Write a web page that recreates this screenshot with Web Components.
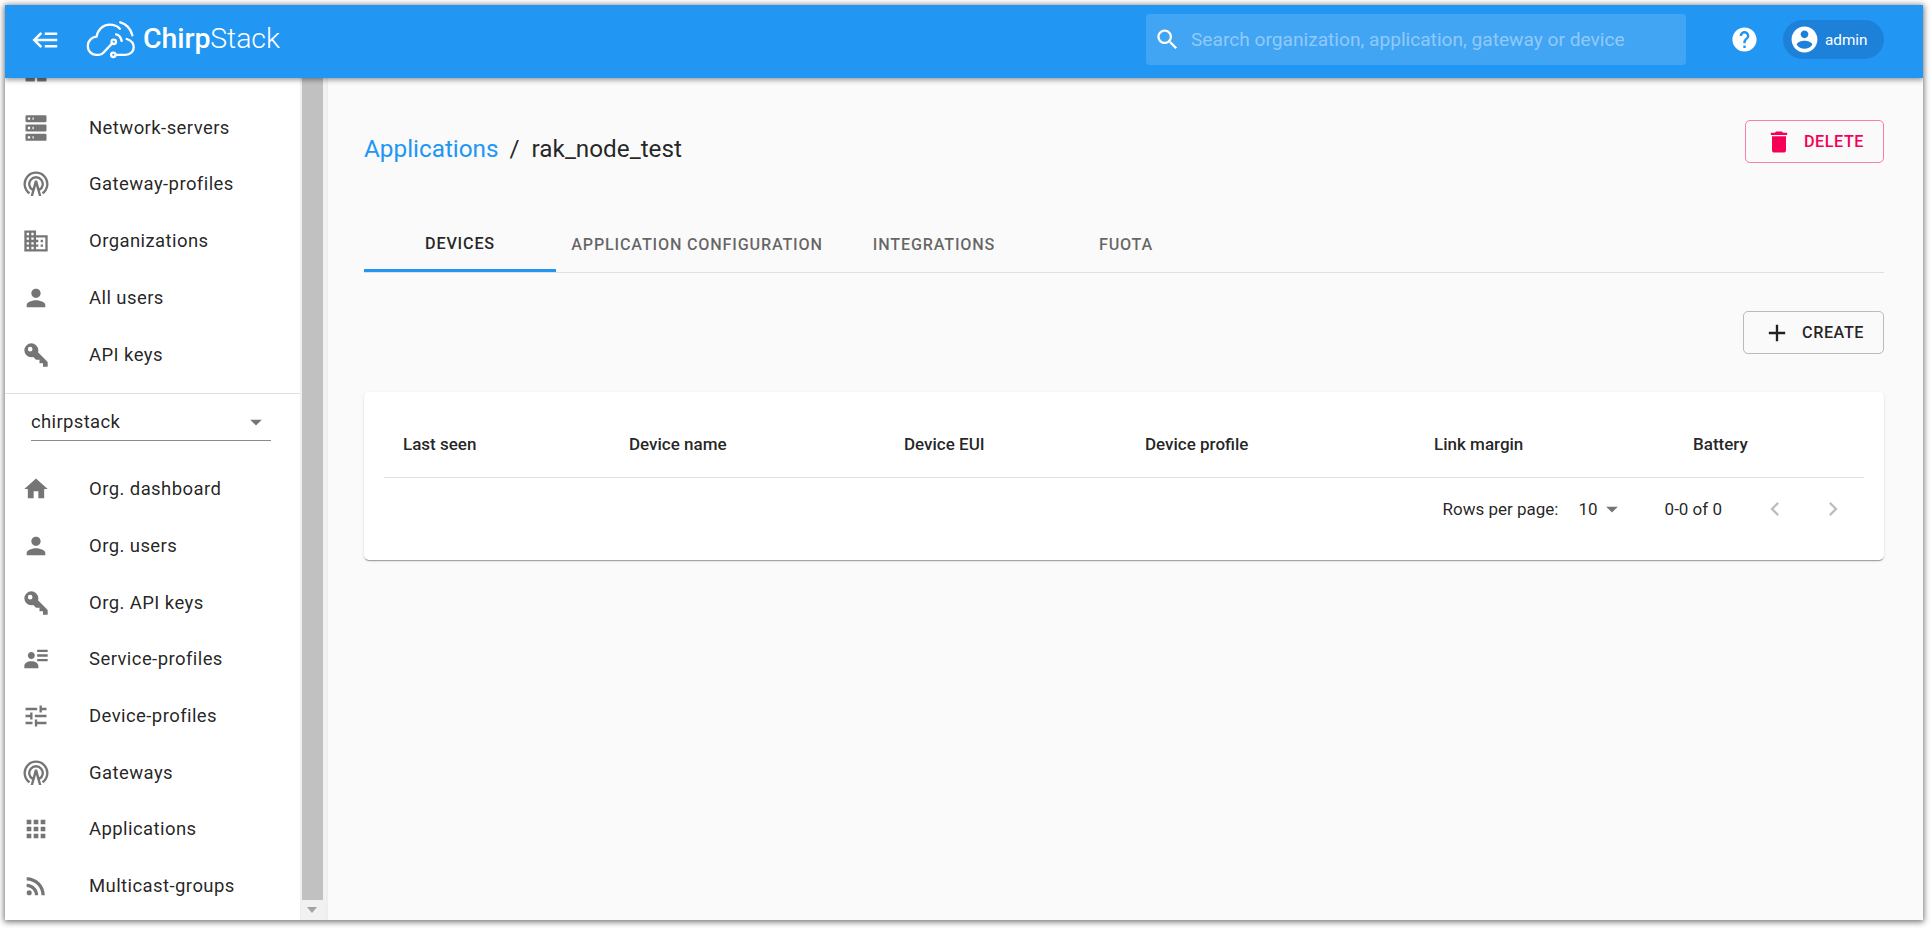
<!DOCTYPE html>
<html lang="en"><head><meta charset="utf-8"><title>ChirpStack</title>
<style>
html,body{margin:0;padding:0;background:#fff;height:100%;overflow:hidden}
body{font-family:Roboto,"Liberation Sans",sans-serif;color:rgba(0,0,0,.87)}
</style></head><body>
<app-frame>
  <app-header></app-header>
  <app-body>
    <side-nav>
      <nav-item icon="dashboard"></nav-item>
      <nav-item icon="server" label="Network-servers"></nav-item>
      <nav-item icon="antenna" label="Gateway-profiles"></nav-item>
      <nav-item icon="domain" label="Organizations"></nav-item>
      <nav-item icon="person" label="All users"></nav-item>
      <nav-item icon="key" label="API keys"></nav-item>
      <org-select slot="select"></org-select>
      <nav-item slot="org" icon="home" label="Org. dashboard"></nav-item>
      <nav-item slot="org" icon="person" label="Org. users"></nav-item>
      <nav-item slot="org" icon="key" label="Org. API keys"></nav-item>
      <nav-item slot="org" icon="details" label="Service-profiles"></nav-item>
      <nav-item slot="org" icon="tune" label="Device-profiles"></nav-item>
      <nav-item slot="org" icon="antenna" label="Gateways"></nav-item>
      <nav-item slot="org" icon="apps" label="Applications"></nav-item>
      <nav-item slot="org" icon="rss" label="Multicast-groups"></nav-item>
    </side-nav>
    <fake-scrollbar></fake-scrollbar>
    <app-main></app-main>
  </app-body>
</app-frame>
<script>
const P={
dashboard:'M3 13h8V3H3v10zm0 8h8v-6H3v6zm10 0h8V11h-8v10zm0-18v6h8V3h-8z',
server:'M4,1H20A1,1 0 0,1 21,2V6A1,1 0 0,1 20,7H4A1,1 0 0,1 3,6V2A1,1 0 0,1 4,1M4,9H20A1,1 0 0,1 21,10V14A1,1 0 0,1 20,15H4A1,1 0 0,1 3,14V10A1,1 0 0,1 4,9M4,17H20A1,1 0 0,1 21,18V22A1,1 0 0,1 20,23H4A1,1 0 0,1 3,22V18A1,1 0 0,1 4,17M9,5H10V3H9V5M9,13H10V11H9V13M9,21H10V19H9V21M5,3V5H7V3H5M5,11V13H7V11H5M5,19V21H7V19H5Z',
antenna:'M5.86 20.77A10.7 10.7 0 1 1 18.14 20.77L16.99 19.13A8.7 8.7 0 1 0 7.01 19.13ZM8.6 17.89A6.8 6.8 0 1 1 15.4 17.89L14.4 16.16A4.8 4.8 0 1 0 9.6 16.16ZM11 9h2l3.6 13.2h-2.1L12 13.5 9.5 22.2H7.4Z',
domain:'M12 7V3H2v18h20V7H12zM6 19H4v-2h2v2zm0-4H4v-2h2v2zm0-4H4V9h2v2zm0-4H4V5h2v2zm4 12H8v-2h2v2zm0-4H8v-2h2v2zm0-4H8V9h2v2zm0-4H8V5h2v2zm10 12h-8v-2h2v-2h-2v-2h2v-2h-2V9h8v10zm-2-8h-2v2h2v-2zm0 4h-2v2h2v-2z',
person:'M12 12c2.21 0 4-1.79 4-4s-1.79-4-4-4-4 1.79-4 4 1.79 4 4 4zm0 2c-2.67 0-8 1.34-8 4v2h16v-2c0-2.66-5.33-4-8-4z',
key:'M22,18V22H18V19H15V16H12L9.74,13.74C9.19,13.91 8.61,14 8,14A6,6 0 0,1 2,8A6,6 0 0,1 8,2A6,6 0 0,1 14,8C14,8.61 13.91,9.19 13.74,9.74L22,18M7,5A2,2 0 0,0 5,7A2,2 0 0,0 7,9A2,2 0 0,0 9,7A2,2 0 0,0 7,5Z',
home:'M10 20v-6h4v6h5v-8h3L12 3 2 12h3v8z',
details:'M11,9C11,10.66 9.66,12 8,12C6.34,12 5,10.66 5,9C5,7.34 6.34,6 8,6C9.66,6 11,7.34 11,9M14,20H2V18C2,15.79 4.69,14 8,14C11.31,14 14,15.79 14,18M22,12V14H13V12M22,8V10H13V8M22,4V6H13V4Z',
tune:'M3 17v2h6v-2H3zM3 5v2h10V5H3zm10 16v-2h8v-2h-8v-2h-2v6h2zM7 9v2H3v2h4v2h2V9H7zm14 4v-2H11v2h10zm-6-4h2V7h4V5h-4V3h-2v6z',
apps:'M4 8h4V4H4v4zm6 12h4v-4h-4v4zm-6 0h4v-4H4v4zm0-6h4v-4H4v4zm6 0h4v-4h-4v4zm6-10v4h4V4h-4zm-6 4h4V4h-4v4zm6 6h4v-4h-4v4zm0 6h4v-4h-4v4z',
rss:'M6.18 15.64a2.18 2.18 0 1 1 0 4.36 2.18 2.18 0 0 1 0-4.36zM4 4.44v2.83c7.03 0 12.73 5.7 12.73 12.73h2.83c0-8.59-6.97-15.56-15.56-15.56zm0 5.66v2.83c3.9 0 7.07 3.17 7.07 7.07h2.83c0-5.47-4.43-9.9-9.9-9.9z',
search:'M15.5 14h-.79l-.28-.27C15.41 12.59 16 11.11 16 9.5 16 5.91 13.09 3 9.5 3S3 5.91 3 9.5 5.91 16 9.5 16c1.61 0 3.09-.59 4.23-1.57l.27.28v.79l5 4.99L20.49 19l-4.99-5zm-6 0C7.01 14 5 11.99 5 9.5S7.01 5 9.5 5 14 7.01 14 9.5 11.99 14 9.5 14z',
help:'M12 2C6.48 2 2 6.48 2 12s4.48 10 10 10 10-4.48 10-10S17.52 2 12 2zm1 17h-2v-2h2v2zm2.07-7.75l-.9.92C13.45 12.9 13 13.5 13 15h-2v-.5c0-1.1.45-2.1 1.17-2.83l1.24-1.26c.37-.36.59-.86.59-1.41 0-1.1-.9-2-2-2s-2 .9-2 2H8c0-2.21 1.79-4 4-4s4 1.79 4 4c0 .88-.36 1.68-.93 2.25z',
account:'M12 2C6.48 2 2 6.48 2 12s4.48 10 10 10 10-4.48 10-10S17.52 2 12 2zm0 3c1.66 0 3 1.34 3 3s-1.34 3-3 3-3-1.34-3-3 1.34-3 3-3zm0 14.2c-2.5 0-4.71-1.28-6-3.22.03-1.99 4-3.08 6-3.08 1.99 0 5.97 1.09 6 3.08-1.29 1.94-3.5 3.22-6 3.22z',
del:'M6 19c0 1.1.9 2 2 2h8c1.1 0 2-.9 2-2V7H6v12zM19 4h-3.5l-1-1h-5l-1 1H5v2h14V4z',
plus:'M19 13h-6v6h-2v-6H5v-2h6V5h2v6h6v2z',
back:'M5,13L9,17L7.6,18.42L1.18,12L7.6,5.58L9,7L5,11H21V13H5M21,6V8H11V6H21M21,16V18H11V16H21Z',
drop:'M7 10l5 5 5-5z',
prev:'M15.41 7.41L14 6l-6 6 6 6 1.41-1.41L10.83 12z',
next:'M10 6L8.59 7.41 13.17 12l-4.58 4.59L10 18l6-6z'};
function def(name,css,html){
  customElements.define(name,class extends HTMLElement{
    constructor(){super();this.attachShadow({mode:'open'});}
    connectedCallback(){
      const h=typeof html==='function'?html(this):html;
      this.shadowRoot.innerHTML='<style>'+css+'</style>'+h;
    }
  });
}
def('x-icon',':host{display:inline-flex;flex:none;width:var(--s,28px);height:var(--s,28px);color:inherit}svg{width:100%;height:100%;display:block;fill:currentColor}',
 e=>`<svg viewBox="0 0 24 24" aria-hidden="true"><path d="${P[e.getAttribute('name')]}"/></svg>`);
def('app-frame',`:host{display:flex;flex-direction:column;margin:5px 0 0 5px;width:1918px;height:915px;background:#fafafa;box-shadow:0 1px 6px 1px rgba(0,0,0,.55);overflow:hidden}`,`<slot></slot>`);
def('app-body',`:host{flex:1;min-height:0;display:flex}`,`<slot></slot>`);
def('app-header',`:host{display:flex;align-items:center;flex:none;height:73px;background:#2196f3;color:#fff;box-shadow:0 2px 5px rgba(0,0,0,.4);position:relative;z-index:2;box-sizing:border-box;padding:0 39px 4px 26px}
 .burger{--s:30px;margin-right:24px}
 .logo{display:flex;align-items:center;gap:6px;margin-top:-1px}
 .logo svg{width:52px;height:40px;display:block}
 .word{font-size:28.500px;line-height:40px;letter-spacing:-.1px;font-family:Roboto,sans-serif;font-weight:500;color:#fff}
 .word span{font-weight:300}
 .search{margin-left:auto;width:540px;height:51px;border-radius:4px;background:rgba(255,255,255,.15);display:flex;align-items:center;box-sizing:border-box;padding-left:8px;margin-right:44px}
 .search x-icon{--s:27px}
 .ph{margin-left:10px;font-size:19.150px;color:rgba(255,255,255,.42)}
 .help{--s:29px;margin-right:24px}
 .chip{display:flex;align-items:center;height:39px;width:101px;border-radius:20px;background:#1d81da;box-sizing:border-box;padding-left:6px;font-size:15.300px;font-weight:400}
 .chip x-icon{--s:31px}
 .chip span{margin-left:5px}`,
 `<x-icon class="burger" name="back"></x-icon>
 <div class="logo"><svg viewBox="84 14 56 42" fill="none" stroke="#fff" stroke-width="2.5" stroke-linecap="round" stroke-linejoin="round">
  <path d="M113 40L104 49.500Q102 52 99 52H96C90.500 52 87 47.500 87 42.500C87 37 91 33 96.500 32.500C97.500 25 103.500 19.500 110.500 19.500C115 19.500 119 21 121.500 24"/>
  <path d="M129 35C133.500 36.500 136.500 40 136.500 44C136.500 48.500 132.500 52 127.500 52H117"/>
  <circle cx="114.500" cy="52" r="2.400"/><circle cx="115" cy="38" r="2.400"/>
  <path d="M122 17C128 18.500 133.500 24 135 31"/><path d="M117.500 30C120.500 30.500 122.500 33 123.500 37"/>
 </svg><div class="word">Chirp<span>Stack</span></div></div>
 <div class="search"><x-icon name="search"></x-icon><span class="ph">Search organization, application, gateway or device</span></div>
 <x-icon class="help" name="help"></x-icon>
 <div class="chip"><x-icon name="account"></x-icon><span>admin</span></div>`);
def('side-nav',`:host{display:block;flex:none;width:296px;height:842px;background:#fff;overflow:hidden;border-right:1px solid #eee;box-sizing:border-box}
 .group1{margin-top:-35.200px;padding-bottom:10.400px;border-bottom:1px solid #e0e0e0}`,
 `<div class="group1"><slot></slot></div><slot name="select"></slot><slot name="org"></slot>`);
def('nav-item',`:host{display:flex;align-items:center;height:56.680px;box-sizing:border-box;padding-left:17px;font-size:18.500px;letter-spacing:.42px;color:rgba(0,0,0,.87)}
 x-icon{color:rgba(0,0,0,.54);margin-right:39px}`,
 e=>`<x-icon name="${e.getAttribute('icon')}"></x-icon>`+(e.hasAttribute('label')?`<span>${e.getAttribute('label')}</span>`:''));
def('org-select',`:host{display:block;height:66.800px;box-sizing:border-box;padding:8px 29px 0 26px}
 .f{display:flex;align-items:center;justify-content:space-between;height:39px;border-bottom:1px solid #8a8a8a;font-size:18.500px;letter-spacing:.35px;padding-top:1px;box-sizing:border-box}
 x-icon{color:rgba(0,0,0,.54);margin-right:1px}`,
 `<div class="f"><span>chirpstack</span><x-icon name="drop"></x-icon></div>`);
def('fake-scrollbar',`:host{flex:none;width:27px;height:842px;background:#f1f1f1;display:flex;flex-direction:column;box-sizing:border-box;border-right:2px solid #eee;padding-left:1px}
 .thumb{flex:none;height:822px;width:21px;background:#c1c1c1}
 .arrow{flex:1;display:flex;align-items:center;justify-content:center;padding-right:4px}
 .tri{width:0;height:0;border:5.500px solid transparent;border-top:6px solid #a3a3a3;border-bottom:0}`,
 `<div class="thumb"></div><div class="arrow"><div class="tri"></div></div>`);
def('app-main',`:host{flex:1;min-width:0;display:block;box-sizing:border-box;padding:42px 39px 0 36px;background:#fafafa}
 .top{display:flex;align-items:center;justify-content:space-between;height:43px}
 .crumbs{display:flex;align-items:center;font-size:24.300px;margin-top:13px;color:rgba(0,0,0,.87)}
 .crumbs a{color:#2196f3}
 .crumbs i{font-style:normal;margin:0 12px 0 11px}
 .tabs{display:flex;margin-top:55px;height:54px;border-bottom:1px solid #e0e0e0}
 .tab{display:flex;align-items:center;justify-content:center;width:192px;height:54px;font-size:16.200px;font-weight:500;letter-spacing:.8px;color:rgba(0,0,0,.6);box-sizing:border-box;padding-bottom:2px}
 .tab.on{color:rgba(0,0,0,.87);border-bottom:3px solid #2196f3;padding-bottom:0}
 .tab.wide{width:282px}
 .act{display:flex;justify-content:flex-end;margin-top:38px}`,
 `<div class="top"><div class="crumbs"><a>Applications</a><i>/</i><span>rak_node_test</span></div>
  <o-btn color="del" icon="del" label="DELETE"></o-btn></div>
  <div class="tabs"><div class="tab on">DEVICES</div><div class="tab wide">APPLICATION CONFIGURATION</div><div class="tab">INTEGRATIONS</div><div class="tab">FUOTA</div></div>
  <div class="act"><o-btn icon="plus" label="CREATE"></o-btn></div>
  <device-table></device-table>`);
def('o-btn',`:host{display:inline-flex;align-items:center;height:43px;box-sizing:border-box;border:1px solid rgba(0,0,0,.25);border-radius:5px;padding:0 19px;font-size:16.200px;font-weight:500;letter-spacing:.55px;color:rgba(0,0,0,.87)}
 :host([color=del]){color:#f50057;border-color:rgba(245,0,87,.5)}
 x-icon{--s:28px;margin-right:11px}`,
 e=>`<x-icon name="${e.getAttribute('icon')}"></x-icon><span>${e.getAttribute('label')}</span>`);
def('device-table',`:host{display:block;margin-top:38px;height:168px;background:#fff;border-radius:5px;box-shadow:0 2px 1px -1px rgba(0,0,0,.2),0 1px 1px rgba(0,0,0,.14),0 1px 3px rgba(0,0,0,.12);box-sizing:border-box;padding:0 20px}
 .head{display:grid;grid-template-columns:226px 275px 241px 289px 259px auto;align-items:center;height:86px;padding:19px 0 0 19px;box-sizing:border-box;border-bottom:1px solid #e0e0e0;font-size:17px;font-weight:500;color:rgba(0,0,0,.87)}
 .foot{display:flex;align-items:center;justify-content:flex-end;height:62px;font-size:17px;color:rgba(0,0,0,.87)}
 .rows{margin-right:20px}
 .dd{--s:28px;color:rgba(0,0,0,.54);margin-right:39px}
 .chev{--s:28px;color:rgba(0,0,0,.26)}
 .pg{margin-right:39px}
 .chev.n{margin-left:30px;margin-right:17px}`,
 `<div class="head"><div>Last seen</div><div>Device name</div><div>Device EUI</div><div>Device profile</div><div>Link margin</div><div>Battery</div></div>
 <div class="foot"><span class="rows">Rows per page:</span><span class="num">10</span><x-icon class="dd" name="drop"></x-icon><span class="pg">0-0 of 0</span><x-icon class="chev" name="prev"></x-icon><x-icon class="chev n" name="next"></x-icon></div>`);
</script>
</body></html>
